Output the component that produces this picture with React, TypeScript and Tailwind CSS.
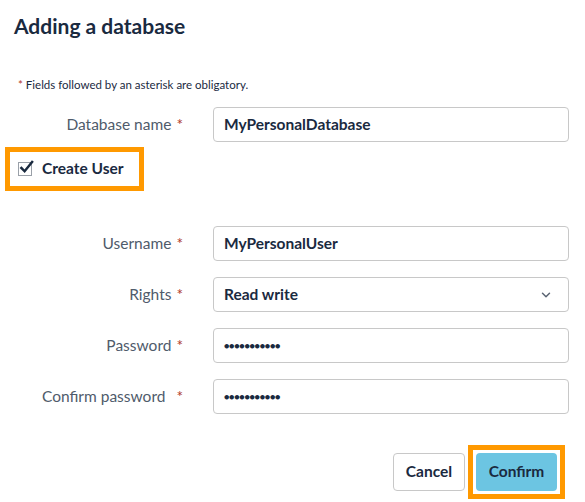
import { ChevronDown } from "lucide-react";

const font = "font-['Lato','Open_Sans',sans-serif]";

type RowProps = {
  label: string;
  gap?: string;
  children: React.ReactNode;
};

const Row = ({ label, gap = "ml-[5px]", children }: RowProps) => (
  <div className="flex items-center">
    <div className="w-[183px] text-right text-[15.5px] text-[#4f5b6b]">
      {label}
      <span className={`${gap} text-[#b23a2a]`}>*</span>
    </div>
    <div className="ml-[30px] flex h-[35px] w-[356px] items-center rounded-[4px] border border-[#c8c8c8] px-[10px] text-[15.5px] font-bold text-[#1a2a3f]">
      {children}
    </div>
  </div>
);

const Dots = () => (
  <span className="text-[9px] tracking-[-0.3px]">{"●●●●●●●●●●●"}</span>
);

export default function App() {
  return (
    <div className={`${font} h-[502px] w-[585px] overflow-hidden bg-white text-[#1a2a3f]`}>
      <h1 className="ml-[14px] mt-[14px] text-[21px] font-bold leading-[24px]">Adding a database</h1>

      <p className="ml-[18px] mt-[40px] text-[11.5px] leading-[14px] text-[#1a2a3f]">
        <span className="text-[#b23a2a]">*</span> Fields followed by an asterisk are obligatory.
      </p>

      <div className="mt-[15px]">
        <Row label="Database name">MyPersonalDatabase</Row>
      </div>

      <div className="ml-[5px] mt-[5px] flex h-[44px] w-[139px] items-center border-[5px] border-[#ff9900] pl-[8px]">
        <span className="relative flex h-[14px] w-[14px] items-center justify-center border border-[#9aa0a8] bg-white">
          <svg viewBox="0 0 16 16" className="absolute -top-[3px] left-[0px] h-[15px] w-[15px]">
            <path d="M2.5 8.5 L6 12 L14 2" fill="none" stroke="#1a2a3f" strokeWidth="2.6" strokeLinecap="square" />
          </svg>
        </span>
        <span className="ml-[10px] text-[15.5px] font-bold">Create User</span>
      </div>

      <div className="mt-[35px] flex flex-col gap-[16px]">
        <Row label="Username">MyPersonalUser</Row>
        <Row label="Rights">
          <span className="flex-1">Read write</span>
          <ChevronDown className="mr-[5px] h-[14px] w-[14px] text-[#5a6473]" strokeWidth={2.5} />
        </Row>
        <Row label="Password">
          <Dots />
        </Row>
        <Row label="Confirm password" gap="ml-[11px]">
          <Dots />
        </Row>
      </div>

      <div className="mt-[31px] flex items-center justify-end pr-[20px]">
        <button className="h-[38px] w-[72px] rounded-[4px] border border-[#c8c8c8] bg-white text-[15.5px] font-bold text-[#1a2a3f]">
          Cancel
        </button>
        <div className="ml-[3px] border-[5px] border-[#ff9900] p-[3px]">
          <button className="block h-[38px] w-[81px] rounded-[4px] bg-[#6cc5e2] text-[15.5px] font-bold text-[#1a2a3f]">
            Confirm
          </button>
        </div>
      </div>
    </div>
  );
}
